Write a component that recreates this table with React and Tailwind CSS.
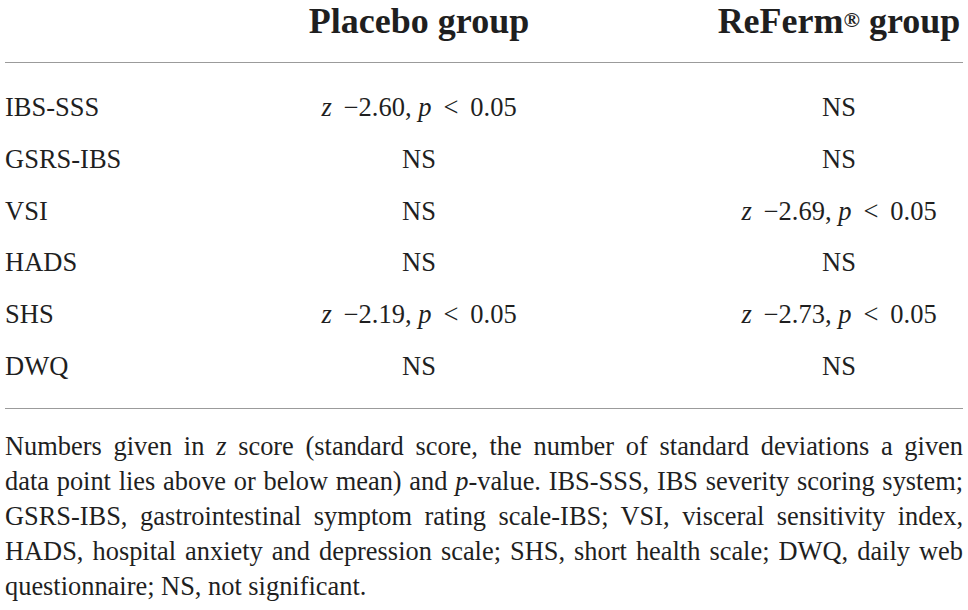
const rows = [
  ["IBS-SSS", { z: "2.60" }, "NS"],
  ["GSRS-IBS", "NS", "NS"],
  ["VSI", "NS", { z: "2.69" }],
  ["HADS", "NS", "NS"],
  ["SHS", { z: "2.19" }, { z: "2.73" }],
  ["DWQ", "NS", "NS"],
];

const Stat = ({ value }) => {
  if (typeof value === "string") return <span>{value}</span>;
  return (
    <span>
      <i>z</i>
      <span className="ml-[0.45em]">−{value.z},</span>{" "}
      <i>p</i>
      <span className="mx-[0.45em]">&lt;</span>0.05
    </span>
  );
};

const notes = [
  <>
    Numbers given in <i>z</i> score (standard score, the number of standard deviations a given
  </>,
  <>
    data point lies above or below mean) and <i>p</i>-value. IBS-SSS, IBS severity scoring system;
  </>,
  <>GSRS-IBS, gastrointestinal symptom rating scale-IBS; VSI, visceral sensitivity index,</>,
  <>HADS, hospital anxiety and depression scale; SHS, short health scale; DWQ, daily web</>,
];

export default function App() {
  return (
    <div className="w-[968px] h-[610px] overflow-hidden bg-white px-[5px] font-['Liberation_Serif','Times_New_Roman',serif] text-[#1f1f1f]">
      {/* header */}
      <div className="grid grid-cols-[118px_592px_248px] pt-[1px] pb-[21px] text-[36px] leading-[40px] font-bold">
        <div />
        <div className="text-center">Placebo group</div>
        <div className="text-center">
          ReFerm<span className="align-[6px] text-[22px] leading-none">®</span> group
        </div>
      </div>
      <div className="h-px bg-[#9b9b9b]" />

      {/* body */}
      <div className="pt-[19px] text-[26.5px] leading-[51.8px]">
        {rows.map(([label, a, b]) => (
          <div key={label} className="grid grid-cols-[118px_592px_248px] whitespace-nowrap">
            <div>{label}</div>
            <div className="text-center">
              <Stat value={a} />
            </div>
            <div className="text-center">
              <Stat value={b} />
            </div>
          </div>
        ))}
      </div>
      <div className="mt-[15px] h-px bg-[#9b9b9b]" />

      {/* footnote */}
      <div className="pt-[20px] text-[26.4px] leading-[35px]">
        {notes.map((line, i) => (
          <div key={i} className="text-justify [text-align-last:justify] whitespace-nowrap">
            {line}
          </div>
        ))}
        <div>questionnaire; NS, not significant.</div>
      </div>
    </div>
  );
}
